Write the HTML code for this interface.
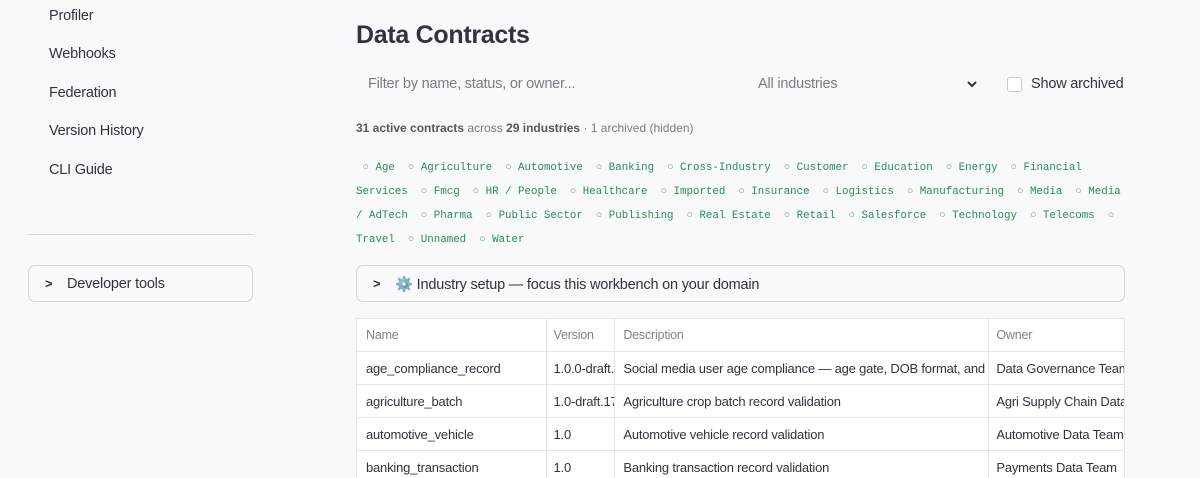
<!DOCTYPE html>
<html><head><meta charset="utf-8"><style>
*{box-sizing:border-box;margin:0;padding:0}
body{width:1200px;height:478px;overflow:hidden;background:#f8f9fb;font-family:"Liberation Sans",sans-serif;color:#31333f;position:relative}
.nav{position:absolute;left:49px;font-size:14.5px;color:#31333f;letter-spacing:-0.2px}
.div{position:absolute;left:28px;width:225px;top:234px;border-top:1px solid #d6d8dd}
.dev{position:absolute;left:28px;top:265px;width:225px;height:37px;border:1px solid #d3d5da;border-radius:7px;font-size:14.5px;padding:10px 0 0 38px;letter-spacing:-0.2px}
.chev{position:absolute;left:16px;top:10px;font-size:13px;font-weight:bold}
h1{position:absolute;left:356px;top:21px;font-size:25px;font-weight:bold;color:#31333f;letter-spacing:-0.3px}
.filter{position:absolute;left:368px;top:76px;font-size:14.5px;color:#7a7d86;letter-spacing:-0.2px}
.ind{position:absolute;left:758px;top:76px;font-size:14.5px;color:#7a7d86;letter-spacing:-0.2px}
.cb{position:absolute;left:1007px;top:77px;width:15px;height:15px;border:1px solid #c8cad0;border-radius:3px;background:#fff}
.sa{position:absolute;left:1031px;top:76px;font-size:14.5px;color:#31333f;letter-spacing:-0.2px}
.sum{position:absolute;left:356px;top:121px;font-size:12px;color:#777a83;letter-spacing:0px}
.sum b{color:#555861}
.tags{position:absolute;left:356px;top:156px;font-family:"Liberation Mono",monospace;font-size:10.8px;color:#2e8b57;line-height:24px;white-space:pre}
.tags i{font-style:normal;color:#6a9c80}
.setup{position:absolute;left:356px;top:265px;width:769px;height:37px;border:1px solid #d3d5da;border-radius:7px;font-size:14.5px;padding:10px 0 0 38px;letter-spacing:-0.2px}
.tbl{position:absolute;left:356px;top:318px;width:769px;border:1px solid #e6e7ea;border-bottom:none;background:#fff;overflow:hidden;height:160px}
.r{display:flex;height:33px;border-bottom:1px solid #e6e7ea;font-size:13px;letter-spacing:-0.2px}
.r div{border-right:1px solid #e6e7ea;padding:9px 0 0 9px;white-space:nowrap;overflow:hidden}
.h{color:#80838c;font-size:12.5px}
.c1{width:190px}.c2{width:69px;padding-left:7px!important}.c3{width:375px;padding-left:8px!important}.c4{width:135px;padding-left:7px!important;border-right:none!important}
</style></head><body>
<div class="nav" style="top:8px">Profiler</div>
<div class="nav" style="top:46px">Webhooks</div>
<div class="nav" style="top:85px">Federation</div>
<div class="nav" style="top:123px">Version History</div>
<div class="nav" style="top:162px">CLI Guide</div>
<div class="div"></div>
<div class="dev"><span class="chev">&gt;</span>Developer tools</div>
<h1>Data Contracts</h1>
<div class="filter">Filter by name, status, or owner...</div>
<div class="ind">All industries</div>
<svg style="position:absolute;left:966px;top:80px" width="12" height="9"><path d="M2 2l4 4 4-4" stroke="#31333f" stroke-width="2" fill="none"/></svg>
<div class="cb"></div>
<div class="sa">Show archived</div>
<div class="sum"><b>31 active contracts</b> across <b>29 industries</b> · 1 archived (hidden)</div>
<div class="tags"> <i>○</i> Age  <i>○</i> Agriculture  <i>○</i> Automotive  <i>○</i> Banking  <i>○</i> Cross-Industry  <i>○</i> Customer  <i>○</i> Education  <i>○</i> Energy  <i>○</i> Financial
Services  <i>○</i> Fmcg  <i>○</i> HR / People  <i>○</i> Healthcare  <i>○</i> Imported  <i>○</i> Insurance  <i>○</i> Logistics  <i>○</i> Manufacturing  <i>○</i> Media  <i>○</i> Media
/ AdTech  <i>○</i> Pharma  <i>○</i> Public Sector  <i>○</i> Publishing  <i>○</i> Real Estate  <i>○</i> Retail  <i>○</i> Salesforce  <i>○</i> Technology  <i>○</i> Telecoms  <i>○</i>
Travel  <i>○</i> Unnamed  <i>○</i> Water</div>
<div class="setup"><span class="chev">&gt;</span>⚙️ Industry setup — focus this workbench on your domain</div>
<div class="tbl">
<div class="r h"><div class="c1">Name</div><div class="c2">Version</div><div class="c3">Description</div><div class="c4">Owner</div></div>
<div class="r"><div class="c1">age_compliance_record</div><div class="c2">1.0.0-draft.2</div><div class="c3">Social media user age compliance — age gate, DOB format, and identity</div><div class="c4">Data Governance Team</div></div>
<div class="r"><div class="c1">agriculture_batch</div><div class="c2">1.0-draft.17</div><div class="c3">Agriculture crop batch record validation</div><div class="c4">Agri Supply Chain Data</div></div>
<div class="r"><div class="c1">automotive_vehicle</div><div class="c2">1.0</div><div class="c3">Automotive vehicle record validation</div><div class="c4">Automotive Data Team</div></div>
<div class="r"><div class="c1">banking_transaction</div><div class="c2">1.0</div><div class="c3">Banking transaction record validation</div><div class="c4">Payments Data Team</div></div>
</div>
</body></html>
